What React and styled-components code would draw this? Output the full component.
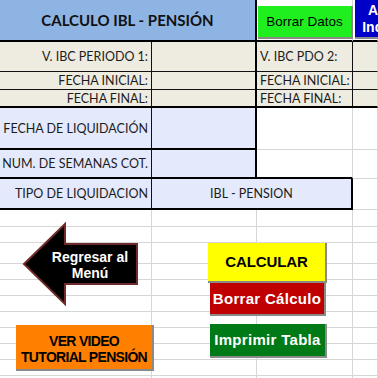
import React from 'react';
import styled, { createGlobalStyle } from 'styled-components';

const GlobalStyle = createGlobalStyle`
    html, body {
        margin: 0;
        padding: 0;
        background: #ffffff;
    }
    body {
        font-family: Lato, "Noto Sans", sans-serif;
    }
`

const GRID = '#d6d6d6';
const TAN = '#eeece1';
const LAV = '#e4eafc';
const HEAD = '#8eb4e3';

const Sheet = styled.div`
    position: relative;
    width: 378px;
    height: 378px;
    overflow: hidden;
    display: grid;
    grid-template-columns: 152px 105px 96px 1fr;
    grid-template-rows: 42px 30px 18px 18px 42px 29px 31px 17px 16px 21px repeat(8, 16px);
`

const Cell = styled.div`
    box-sizing: border-box;
    grid-column: span ${p => p.$span || 1};
    background: ${p => p.$bg || '#ffffff'};
    border-right: ${p => p.$r || `1px solid ${GRID}`};
    border-bottom: ${p => p.$b || `1px solid ${GRID}`};
    display: flex;
    align-items: center;
    justify-content: ${p => p.$align === 'left' ? 'flex-start' : p.$align === 'center' ? 'center' : 'flex-end'};
    padding: 0 3px;
    font-size: 12.5px;
    color: #1c1c1c;
    white-space: nowrap;
    overflow: hidden;
`

const Title = styled(Cell)`
    font-size: 15px;
    font-weight: bold;
    color: #111111;
`

const Floating = styled.div`
    position: absolute;
    box-sizing: border-box;
    display: flex;
    align-items: center;
    justify-content: center;
    text-align: center;
    font-family: "Liberation Sans", Arial, sans-serif;
    font-weight: bold;
    white-space: pre;
    border-right: 2px solid #8a8a8a;
    border-bottom: 2px solid #8a8a8a;
    left: ${p => p.$x}px;
    top: ${p => p.$y}px;
    width: ${p => p.$w}px;
    height: ${p => p.$h}px;
    padding-top: ${p => p.$pt || 0}px;
    background: ${p => p.$bg};
    color: ${p => p.$color || '#000000'};
    font-size: ${p => p.$size || 14}px;
    line-height: ${p => p.$lh || 1.15};
    letter-spacing: ${p => p.$ls || 0}px;
`

const PlainButton = styled(Floating)`
    font-weight: normal;
`

const ArrowShape = styled.div`
    position: absolute;
    left: 22px;
    top: 222px;
    width: 118px;
    height: 84px;
    & svg {
        position: absolute;
        inset: 0;
    }
`

const ArrowLabel = styled.div`
    position: absolute;
    inset: 0;
    padding: 2px 0 0 18px;
    display: flex;
    align-items: center;
    justify-content: center;
    text-align: center;
    white-space: pre;
    font-family: "Liberation Sans", Arial, sans-serif;
    font-weight: bold;
    font-size: 14px;
    line-height: 1.15;
    color: #ffffff;
`

const DARK = '1px solid #111';
const THICK = '2px solid #000';

const App = () => {
    const blankRows = Array.from({ length: 11 });
    return (
        <>
            <GlobalStyle />
            <Sheet>
                <Title $span={2} $bg={HEAD} $align="center" $r={THICK} $b={THICK}>CALCULO IBL - PENSIÓN</Title>
                <Cell $b={THICK} />
                <Cell $b={THICK} />

                <Cell $bg={TAN} $r={DARK} $b={DARK}>V. IBC PERIODO 1:</Cell>
                <Cell $bg={TAN} $r={THICK} $b={DARK} />
                <Cell $bg={TAN} $align="left" $r={DARK} $b={DARK}>V. IBC PDO 2:</Cell>
                <Cell $bg={TAN} $b={DARK} />

                <Cell $bg={TAN} $r={DARK} $b={DARK}>FECHA INICIAL:</Cell>
                <Cell $bg={TAN} $r={THICK} $b={DARK} />
                <Cell $bg={TAN} $align="left" $r={DARK} $b={DARK}>FECHA INICIAL:</Cell>
                <Cell $bg={TAN} $b={DARK} />

                <Cell $bg={TAN} $r={DARK} $b={THICK}>FECHA FINAL:</Cell>
                <Cell $bg={TAN} $r={THICK} $b={THICK} />
                <Cell $bg={TAN} $align="left" $r={DARK} $b={THICK}>FECHA FINAL:</Cell>
                <Cell $bg={TAN} $b={THICK} />

                <Cell $bg={LAV} $r={DARK} $b={THICK}>FECHA DE LIQUIDACIÓN</Cell>
                <Cell $bg={LAV} $r={THICK} $b={THICK} />
                <Cell />
                <Cell />

                <Cell $bg={LAV} $r={DARK} $b={THICK}>NUM. DE SEMANAS COT.</Cell>
                <Cell $bg={LAV} $r={THICK} $b={THICK} />
                <Cell $b={THICK} />
                <Cell />

                <Cell $bg={LAV} $r={DARK} $b={THICK}>TIPO DE LIQUIDACION</Cell>
                <Cell $span={2} $bg={LAV} $align="center" $r={THICK} $b={THICK}>IBL - PENSION</Cell>
                <Cell />

                {blankRows.map((_, i) => (
                    <React.Fragment key={i}>
                        <Cell />
                        <Cell />
                        <Cell />
                        <Cell />
                    </React.Fragment>
                ))}

                <PlainButton $x={258} $y={6} $w={95} $h={33} $bg="#1fef1f" $size={13.5}>Borrar Datos</PlainButton>
                <Floating $x={355} $y={0} $w={95} $h={39} $bg="#0000c8" $color="#ffffff" $size={14} $lh={1.2}>{'Actualizar\nIndicadores'}</Floating>

                <ArrowShape>
                    <svg width="118" height="84" viewBox="0 0 118 84">
                        <polygon
                            points="2,42 43,2 43,22 115,22 115,62 43,62 43,82"
                            fill="#000000"
                            stroke="#6e2b2b"
                            strokeWidth="2"
                            strokeLinejoin="miter"
                        />
                    </svg>
                    <ArrowLabel>{'Regresar al\nMenú'}</ArrowLabel>
                </ArrowShape>

                <Floating $x={208} $y={243} $w={119} $h={40} $bg="#ffff00" $size={15} $ls={-0.1}>CALCULAR</Floating>
                <Floating $x={210} $y={283} $w={116} $h={33} $bg="#c00000" $color="#ffffff" $size={15} $ls={0.3}>Borrar Cálculo</Floating>
                <Floating $x={210} $y={324} $w={117} $h={34} $bg="#007a16" $color="#ffffff" $size={15} $ls={0.3}>Imprimir Tabla</Floating>

                <Floating $x={16} $y={325} $w={138} $h={46} $bg="#ff8000" $size={14} $ls={-0.7} $lh={1.08} $pt={5}>{'VER VIDEO\nTUTORIAL PENSIÓN'}</Floating>
            </Sheet>
        </>
    )
}

export default App;
